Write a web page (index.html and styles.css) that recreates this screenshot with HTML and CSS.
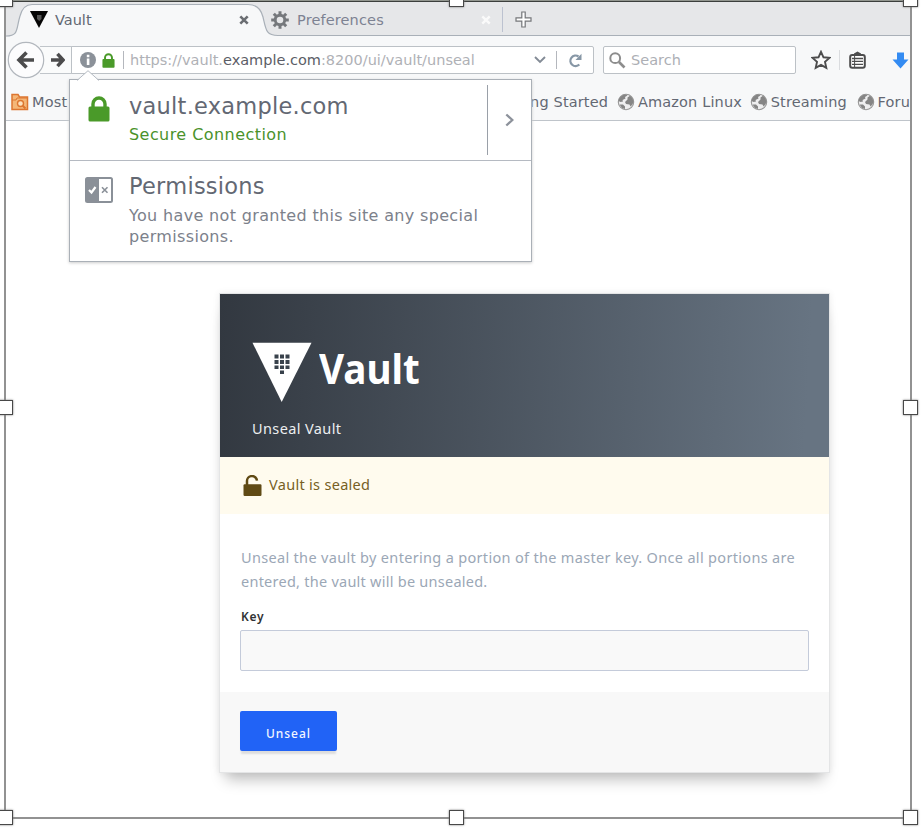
FILE: index.html
```html
<!DOCTYPE html>
<html lang="en">
<head>
<meta charset="utf-8">
<title>Vault</title>
<link rel="stylesheet" href="styles.css">
</head>
<body>
<div class="stage">
<svg width="0" height="0" class="defs">
  <symbol id="globe" viewBox="0 0 18 18"><circle cx="9" cy="9" r="7.700" fill="#eeeeef" stroke="#979797" stroke-width="1.100"/><path d="M1.500 8Q2.500 2 9 1.500L10.500 2.500 8 4 8.500 5.500 5.500 7 6 8.500 3.500 9zM10.500 4.500L13 2.800Q16 4.500 16.500 8.500L15.500 11.500 13.500 13.500 12.500 11.500 9 11 8 9 10.500 6.500zM2.500 11.500L6 11.500 8 13.500 8 16 5 15z" fill="#858585"/></symbol>
  <symbol id="lock" viewBox="0 0 22 26"><path d="M5 12V8a6 6 0 0 1 12 0v4" fill="none" stroke="#4a9a29" stroke-width="3.400"/><rect x="0.500" y="10.500" width="21" height="15" rx="1.500" fill="#4a9a29"/></symbol>
</svg>
<div class="window">
  <div class="tabs">
    <svg class="tab-shape" width="904" height="35" viewBox="0 0 904 35">
      <path d="M0 34.500C13 34.500 10 27 14 14Q17 2.500 26 2.500H242Q254 2.500 257 15C260 28 260 33.500 272 33.500H904V36H0z" fill="#f7f8f9"/>
      <path d="M0 34C13 34 10 27 14 14Q17 2.500 26 2.500H242Q254 2.500 257 15C260 28 260 33.500 272 33.500H904" fill="none" stroke="#a9b0b8" stroke-width="1.200"/>
    </svg>
    <div class="tab tab-active">
      <svg width="18" height="17" viewBox="0 0 18 17"><path d="M0 0H18L9 17z" fill="#050505"/><path d="M7 4h4.500v4L9.200 10 7 8z" fill="#555"/></svg>
      <span class="tab-title">Vault</span>
      <svg class="close" width="10" height="10" viewBox="0 0 10 10"><path d="M1.300 1.300L8.700 8.700M8.700 1.300L1.300 8.700" stroke="#6b6e73" stroke-width="2.600"/></svg>
    </div>
    <div class="tab tab-idle">
      <svg width="18" height="18" viewBox="0 0 18 18"><g stroke="#75787c" stroke-width="3"><path d="M9 .2V17.800M.2 9H17.800M2.800 2.800L15.200 15.200M15.200 2.800L2.800 15.200"/></g><circle cx="9" cy="9" r="6.200" fill="#75787c"/><circle cx="9" cy="9" r="3.300" fill="#e6e7e9"/></svg>
      <span class="tab-title">Preferences</span>
      <svg class="close" width="10" height="10" viewBox="0 0 10 10"><path d="M1.300 1.300L8.700 8.700M8.700 1.300L1.300 8.700" stroke="#fafafa" stroke-width="2.400"/></svg>
    </div>
    <svg class="plus" width="17" height="17" viewBox="0 0 17 17"><path d="M6.800 1h3.400v5.800H16v3.400h-5.800V16H6.800v-5.800H1V6.800h5.800z" fill="#fff" stroke="#747679" stroke-width="1.200"/></svg>
  </div>
  <div class="nav">
    <svg class="back" width="38" height="38" viewBox="0 0 38 38"><circle cx="19" cy="19" r="17.700" fill="#fcfcfd" stroke="#b2b7bd" stroke-width="1.200"/><path d="M19.500 11.500L12 19l7.500 7.500M12.500 19H27" fill="none" stroke="#4c4c4d" stroke-width="3.600"/></svg>
    <div class="forward"><svg width="14" height="16" viewBox="0 0 14 16"><path d="M6.500 1.800L12 8l-5.500 6.200M0 8H12" fill="none" stroke="#4c4c4d" stroke-width="3.500"/></svg></div>
    <div class="address">
      <svg width="16" height="16" viewBox="0 0 16 16"><circle cx="8" cy="8" r="8" fill="#8b9199"/><path d="M6.800 2.700h2.600v2.500H6.800zM6.800 6.500h2.600v6.500H6.800z" fill="#fff"/></svg>
      <svg class="small-lock" width="13" height="15"><use href="#lock"/></svg>
      <i class="bar"></i>
      <span class="url">https://vault.<b>example.com</b>:8200/ui/vault/unseal</span>
      <svg class="drop" width="12" height="8" viewBox="0 0 12 8"><path d="M1 1l5 5 5-5" fill="none" stroke="#838b96" stroke-width="1.900"/></svg>
      <i class="bar"></i>
      <svg class="reload" width="15" height="15" viewBox="0 0 15 15"><path d="M11.300 11.500A5.200 5.200 0 1 1 10.500 3.500" fill="none" stroke="#8797a6" stroke-width="2.300"/><path d="M13.500 .8v6.200H7.500z" fill="#8797a6"/></svg>
    </div>
    <div class="search">
      <svg width="17" height="17" viewBox="0 0 17 17"><circle cx="6.200" cy="6.200" r="4.900" fill="none" stroke="#8d8d8d" stroke-width="2"/><path d="M10 10l5.500 5.500" stroke="#8d8d8d" stroke-width="2.700"/></svg>
      <span>Search</span>
    </div>
    <svg class="star" width="20" height="20" viewBox="0 0 20 20"><path d="M10 1.800l2.500 5.500 6 .6-4.500 4 1.300 6L10 14.900 4.700 17.900 6 11.900 1.500 7.900l6-.6z" fill="#fafafa" stroke="#4c4c4d" stroke-width="1.900"/></svg>
    <i class="thin"></i>
    <svg class="list" width="17" height="18" viewBox="0 0 17 18"><path d="M5 4V2.500L8.500 .5 12 2.500V4z" fill="#4c4c4d"/><rect x="1.200" y="4" width="14.600" height="12.700" rx="2" fill="#fff" stroke="#4c4c4d" stroke-width="2"/><path d="M3 7.500h11M3 10.400h11M3 13.400h11" stroke="#4c4c4d" stroke-width="1.300"/><path d="M5.600 5v11" stroke="#4c4c4d" stroke-width="1"/></svg>
    <svg class="download" width="17" height="17" viewBox="0 0 17 17"><path d="M5 .5h7v7h4.500L8.500 16.500.5 7.500H5z" fill="#338bf2"/></svg>
  </div>
  <div class="bookmarks">
    <svg class="folder" width="18" height="18" viewBox="0 0 18 18"><path d="M1 16.500V1.500H7L8.500 4H16.500V16.500z" fill="#f4b778" stroke="#dd7630" stroke-width="1.500"/><path d="M1 7h4l1-2h10" stroke="#dd7630" fill="none"/><circle cx="9.500" cy="10.500" r="3" fill="#fde2c0" stroke="#dd7630" stroke-width="1.400"/><path d="M11.500 12.500L14.500 15.500" stroke="#dd7630" stroke-width="2"/></svg>
    <span class="bm most">Most</span>
    <span class="bm started">ng Started</span>
    <svg class="globe" width="18" height="18"><use href="#globe"/></svg><span class="bm amazon">Amazon Linux</span>
    <svg class="globe" width="18" height="18"><use href="#globe"/></svg><span class="bm streaming">Streaming</span>
    <svg class="globe" width="18" height="18"><use href="#globe"/></svg><span class="bm">Foru</span>
  </div>
  <main class="page">
    <section class="card">
      <header class="hero">
        <div class="brand">
          <svg width="60" height="60" viewBox="0 0 60 60"><path d="M0.500 .8H59.500L29.700 60z" fill="#fff"/><path d="M22.500 12.500h4v4h-4zM28 12.500h4v4h-4zM33.500 12.500h4v4h-4zM22.500 18h4v4h-4zM28 18h4v4h-4zM33.500 18h4v4h-4zM22.500 23.500h4v3.500h-4zM28 23.500h4v3.500h-4zM33.500 23.500h4v3.500h-4zM28 28.500h4v3.500h-4z" fill="#38414b"/></svg>
          <span>Vault</span>
        </div>
        <div class="subtitle">Unseal Vault</div>
      </header>
      <div class="notice">
        <svg width="19" height="22" viewBox="0 0 19 22"><path d="M4 11V6.500a5 5 0 0 1 10-.8" fill="none" stroke="#604a14" stroke-width="2.500"/><rect x="0.500" y="9.300" width="18" height="11.700" rx="1.200" fill="#604a14"/></svg>
        <span>Vault is sealed</span>
      </div>
      <div class="body">
        <p><span class="l1">Unseal the vault by entering a portion of the master key. Once all portions are</span><br><span class="l2">entered, the vault will be unsealed.</span></p>
        <label for="key">Key</label>
        <input id="key" type="text">
      </div>
      <footer><button type="button">Unseal</button></footer>
    </section>
  </main>
  <aside class="popup">
    <svg class="arrow" width="22" height="11" viewBox="0 0 22 11"><path d="M0 11L11 .7 22 11z" fill="#fff"/><path d="M0 10.500L11 .7 22 10.500" fill="none" stroke="#b5bbc3"/></svg>
    <div class="row secure">
      <svg class="big-lock" width="22" height="26"><use href="#lock"/></svg>
      <div class="copy"><div class="title host">vault.example.com</div><div class="ok">Secure Connection</div></div>
      <div class="more"><svg width="9" height="14" viewBox="0 0 9 14"><path d="M1.300 1.500L7.300 7l-6 5.500" fill="none" stroke="#8d929b" stroke-width="2.300"/></svg></div>
    </div>
    <div class="row perms">
      <svg class="perm-icon" width="28" height="26" viewBox="0 0 28 26"><rect x="1" y="1" width="26" height="24" rx="1.500" fill="#fff" stroke="#8a9098" stroke-width="2"/><path d="M1 1h13v24H1z" fill="#8a9098"/><path d="M4 13l2.500 2.500L10.500 10" fill="none" stroke="#fff" stroke-width="2.200"/><path d="M17 10.300l5.500 5.500M22.500 10.300L17 15.800" stroke="#8a9098" stroke-width="1.600"/></svg>
      <div class="copy"><div class="title permission">Permissions</div><div class="desc"><span class="d1">You have not granted this site any special</span><br><span class="d2">permissions.</span></div></div>
    </div>
  </aside>
</div>
<i class="edge"></i>
<i class="handle tl"></i><i class="handle tc"></i><i class="handle tr"></i>
<i class="handle ml"></i><i class="handle mr"></i>
<i class="handle bl"></i><i class="handle bc"></i><i class="handle br"></i>
</div>
</body>
</html>
```
FILE: styles.css
```css
* { box-sizing: border-box; }
body { margin: 0; background: #fff; font-family: "DejaVu Sans", sans-serif; color: #636873; }
svg { display: block; flex: none; }
.defs { position: absolute; }
.stage { position: relative; width: 924px; height: 828px; overflow: hidden; }
.window { position: relative; width: 908px; height: 819px; margin-left: 4px; border: 2px solid #929292; border-top: 0; overflow: hidden; }
.edge { position: absolute; top: 0; left: 5px; width: 906px; height: 2px; background: #3c3f3d; border-top: 1px solid #92968f; }
.handle { position: absolute; width: 15px; height: 15px; background: #fff; border: 1px solid #484848; box-shadow: 0 0 2px #777; }
.tl, .tc, .tr { top: -8px; }
.ml, .mr { top: 400px; }
.bl, .bc, .br { top: 810px; }
.tl, .ml, .bl { left: -2px; }
.tc, .bc { left: 449px; }
.tr, .mr, .br { left: 903px; }

.tabs { position: relative; height: 37px; padding-top: 2px; display: flex; align-items: center; background: #e6e7e9; }
.tab-shape { position: absolute; left: 0; top: 2px; }
.tab { position: relative; display: flex; align-items: center; height: 35px; font-size: 14.500px; }
.tab-active { width: 266px; padding-left: 24px; gap: 7px; }
.tab-active .close { margin-left: auto; margin-right: 23px; }
.tab-idle { width: 232px; height: 25px; margin-left: -1px; border-right: 1px solid #bcc2d0; gap: 8px; color: #7d8292; letter-spacing: .14px; }
.tab-idle .close { margin-left: auto; margin-right: 11px; }
.plus { position: relative; margin-left: 12px; }

.nav { height: 46px; display: flex; align-items: center; background: #f7f8f9; }
.back { position: relative; z-index: 1; margin-left: 1px; }
.forward { width: 32px; height: 28px; margin-left: -5px; display: flex; align-items: center; justify-content: center; padding-left: 4px; border: 1px solid #c0c5ca; border-left: 0; background: #fafbfb; }
.address { width: 523px; height: 28px; margin-left: -1px; padding-left: 8px; display: flex; align-items: center; border: 1px solid #bcc1c6; border-radius: 0 2px 2px 0; background: #fff; font-size: 14.500px; }
.small-lock { margin: 0 8px 0 6px; }
.bar { width: 1px; height: 18px; background: #b4b7bd; }
.url { width: 346px; margin-left: 6px; color: #afb1b6; white-space: nowrap; }
.url b { font-weight: 400; color: #5b5d66; }
.drop { margin: 0 10px 0 58px; }
.reload { margin-left: 11px; }
.search { width: 193px; height: 28px; margin-left: 9px; padding-left: 5px; display: flex; align-items: center; gap: 5px; border: 1px solid #bcc1c6; border-radius: 2px; background: #fff; color: #adafb5; font-size: 14.500px; }
.star { margin-left: 15px; }
.thin { width: 1px; height: 20px; margin-left: 8px; background: #dadcdf; }
.list { margin-left: 9px; }
.download { margin-left: 26px; }

.bookmarks { height: 38px; display: flex; align-items: center; padding-left: 5px; border-bottom: 1px solid #bfc4ca; background: #f7f8f9; font-size: 14.500px; letter-spacing: .15px; white-space: nowrap; }
.folder { margin-right: 1px; }
.most { width: 495px; margin-left: 2px; }
.started { width: 87px; margin-left: 4px; }
.bookmarks .globe { margin-right: 3px; }
.amazon { width: 112px; }
.streaming { width: 86px; }

.page { padding: 172px 0 0 213px; }
.card { width: 611px; height: 480px; border: 1px solid #e4e5e6; box-shadow: 0 13px 14px -7px #bababa, 0 0 7px #eee; font-family: "Noto Sans", sans-serif; }
.hero { height: 163px; margin: 0; padding: 48px 0 0 32px; background: linear-gradient(93deg, #323840, #677482 96%); color: #fff; }
.brand { height: 60px; display: flex; align-items: center; gap: 7px; }
.brand span { font-size: 42px; font-weight: 700; line-height: 50px; margin-top: -8px; transform: scaleX(.92); transform-origin: left; }
.subtitle { margin-top: 15px; font-size: 14.500px; line-height: 22px; letter-spacing: .38px; color: #eceef0; }
.notice { height: 57px; padding: 0 0 0 23px; display: flex; align-items: center; gap: 7px; background: #fffbee; color: #765f24; font-size: 14.500px; }
.notice span { margin-top: -3px; letter-spacing: .3px; }
.body { height: 178px; padding: 31px 20px 0; }
.body p { margin: 0 0 0 1px; font-size: 14.500px; line-height: 24px; color: #9ba7b6; white-space: nowrap; }
.l1 { letter-spacing: .32px; }
.l2 { letter-spacing: .25px; }
.body label { display: block; margin: 15px 0 0 1px; font-size: 12px; line-height: 18px; letter-spacing: .7px; font-weight: 600; color: #303234; }
.body input { display: block; width: 569px; height: 41px; margin-top: 4px; border: 1px solid #c4cbda; border-radius: 2px; background: #f9f9f9; }
footer { height: 80px; padding: 19px 20px; background: #f8f8f8; }
button { display: block; width: 97px; height: 40px; padding: 4px 0 0; border: 0; border-radius: 2px; background: #2163f6; color: #f2f6ff; font: 500 12px "Noto Sans", sans-serif; letter-spacing: 1px; box-shadow: 0 4px 2px -1px #ddd; }

.popup { position: absolute; left: 63px; top: 79px; width: 463px; height: 183px; border: 1px solid #aab0b7; background: #fff; box-shadow: 0 1px 3px #ccc; }
.arrow { position: absolute; left: 7px; top: -10px; }
.row { display: flex; align-items: flex-start; }
.secure { height: 81px; border-bottom: 1px solid #b5bac2; }
.big-lock { margin: 16px 19px 0 18px; }
.secure .copy { width: 358px; padding-top: 12px; }
.title { font-size: 22.500px; line-height: 28px; white-space: nowrap; }
.host { letter-spacing: .24px; }
.permission { letter-spacing: .25px; }
.ok { margin-top: 4px; font-size: 16px; line-height: 22px; letter-spacing: .44px; color: #4a922b; }
.more { width: 44px; height: 70px; margin-top: 5px; border-left: 1px solid #9aa0a8; display: flex; align-items: center; justify-content: center; }
.perm-icon { margin: 16px 16px 0 15px; }
.perms .copy { padding-top: 11px; }
.desc { margin-top: 6px; font-size: 16px; line-height: 20.500px; letter-spacing: .34px; color: #7c818b; white-space: nowrap; }
```
